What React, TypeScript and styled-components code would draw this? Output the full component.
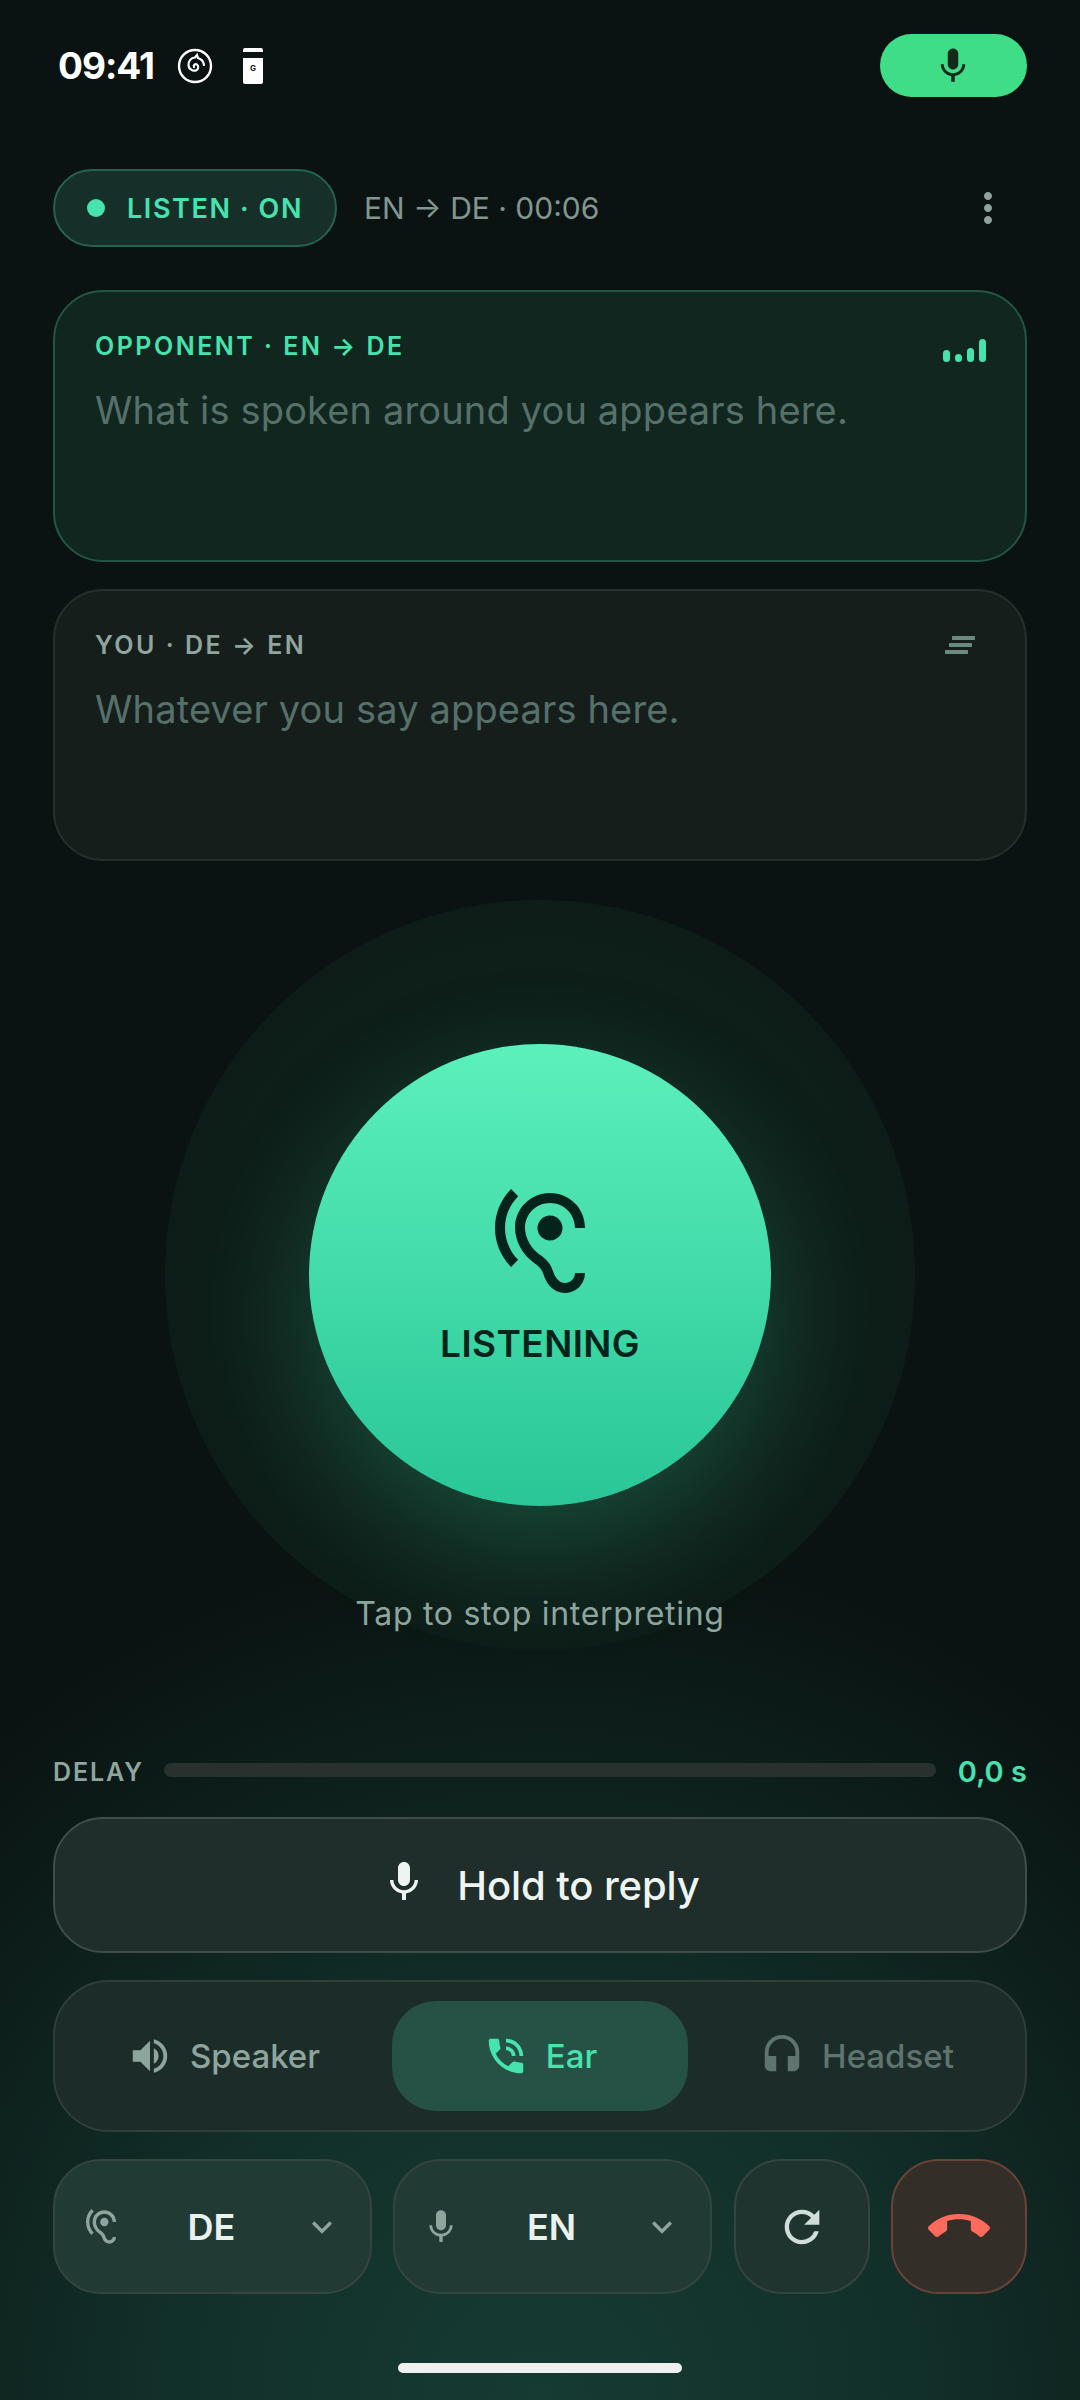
import React from 'react';
import styled, { createGlobalStyle } from 'styled-components';
import {
  MdMic,
  MdMoreVert,
  MdHearing,
  MdVolumeUp,
  MdPhoneInTalk,
  MdHeadset,
  MdExpandMore,
  MdRefresh,
  MdCallEnd,
} from 'react-icons/md';

const GlobalStyle = createGlobalStyle`
  html, body {
    margin: 0;
    padding: 0;
    background: #0b1412;
  }
  * {
    box-sizing: border-box;
  }
`;

const Screen = styled.div`
  width: 1080px;
  height: 2400px;
  overflow: hidden;
  display: flex;
  flex-direction: column;
  padding: 34px 53px 0;
  font-family: Inter, 'Noto Sans', sans-serif;
  background:
    radial-gradient(ellipse 860px 860px at 50% 2400px, #163b32 0%, #12302a 42%, rgba(11, 20, 18, 0) 100%),
    #0a1311;
`;

const StatusBar = styled.div`
  height: 63px;
  display: flex;
  align-items: center;
  padding-left: 5px;
`;

const Clock = styled.span`
  font-size: 37px;
  font-weight: 700;
  color: #ffffff;
  letter-spacing: -1px;
`;

const SpiralIcon = styled.svg`
  width: 36px;
  height: 36px;
  margin-left: 23px;
`;

const PhoneBadge = styled.div`
  width: 20px;
  height: 36px;
  margin-left: 30px;
  background: #ffffff;
  border-radius: 2px;
  padding-top: 4px;
  display: flex;
  flex-direction: column;
  align-items: center;
`;

const PhoneCamera = styled.div`
  width: 100%;
  height: 6px;
  background: #0b1412;
`;

const PhoneLogo = styled.span`
  font-size: 8px;
  font-weight: 700;
  line-height: 1;
  margin-top: 6px;
  color: #0b1412;
`;

const MicPill = styled.div`
  margin-left: auto;
  width: 147px;
  height: 63px;
  border-radius: 32px;
  background: #3fdd87;
  display: flex;
  align-items: center;
  justify-content: center;
  color: #10291c;
  font-size: 42px;
  padding-right: 2px;
`;

const ListenRow = styled.div`
  margin-top: 72px;
  height: 78px;
  display: flex;
  align-items: center;
`;

const ListenChip = styled.div`
  width: 284px;
  height: 78px;
  border-radius: 39px;
  border: 2px solid #256350;
  background: #162f28;
  display: flex;
  align-items: center;
  padding-left: 32px;
  gap: 22px;
`;

const ChipDot = styled.span`
  width: 18px;
  height: 18px;
  border-radius: 50%;
  background: #46e3ae;
`;

const ChipText = styled.span`
  font-size: 27px;
  font-weight: 600;
  letter-spacing: 1.6px;
  color: #46e3ae;
  white-space: nowrap;
`;

const SessionText = styled.span`
  margin-left: 27px;
  font-size: 30px;
  letter-spacing: 0;
  color: #82968f;
  white-space: nowrap;
`;

const MoreButton = styled.div`
  margin-left: auto;
  margin-right: 15px;
  color: #8ea59e;
  font-size: 48px;
  display: flex;
`;

const Card = styled.section<{ $active?: boolean }>`
  height: 272px;
  border-radius: 50px;
  padding: 39px 39px 0 40px;
  border: 2px solid ${(p) => (p.$active ? '#215644' : '#262f2c')};
  background: ${(p) => (p.$active ? '#11261f' : '#161e1c')};
`;

const FirstCard = styled(Card)`
  margin-top: 43px;
`;

const SecondCard = styled(Card)`
  margin-top: 27px;
`;

const CardHead = styled.div`
  height: 30px;
  display: flex;
  align-items: center;
  justify-content: space-between;
`;

const CardLabel = styled.span<{ $active?: boolean }>`
  font-size: 25px;
  font-weight: 600;
  letter-spacing: 2.5px;
  color: ${(p) => (p.$active ? '#46e3ae' : '#8fa59e')};
  white-space: nowrap;
`;

const Bars = styled.div`
  display: flex;
  align-items: flex-end;
  gap: 5px;
  height: 23px;
  margin-top: 8px;
`;

const Bar = styled.span<{ $h: number }>`
  width: 7px;
  height: ${(p) => p.$h}px;
  border-radius: 4px;
  background: #46e3ae;
`;

const LinesIcon = styled.svg`
  width: 30px;
  height: 18px;
  margin-right: 11px;
`;

const CardBody = styled.p`
  margin: 25px 0 0;
  font-size: 38px;
  letter-spacing: 0.15px;
  line-height: 48px;
  color: #56706a;
  white-space: nowrap;
`;

const Halo = styled.div`
  margin: 39px auto 0;
  width: 750px;
  height: 750px;
  flex: none;
  border-radius: 50%;
  display: flex;
  flex-direction: column;
  align-items: center;
  padding-top: 144px;
  background: radial-gradient(circle at 50% 50%, #0f211c 0%, #0e1e19 60%, #0c1815 100%);
`;

const BigButton = styled.div`
  width: 462px;
  height: 462px;
  flex: none;
  border-radius: 50%;
  background: linear-gradient(180deg, #5cf0bc 0%, #29c697 100%);
  box-shadow: 0 40px 120px rgba(60, 220, 165, 0.24);
  display: flex;
  flex-direction: column;
  align-items: center;
  padding-top: 139px;
  color: #04241b;
  font-size: 120px;
`;

const BigLabel = styled.span`
  margin-top: 18px;
  font-size: 37px;
  font-weight: 600;
  letter-spacing: 0.4px;
  line-height: 46px;
`;

const Hint = styled.p`
  margin: 88px 0 0;
  font-size: 32px;
  letter-spacing: 0.7px;
  line-height: 40px;
  color: #8ea59e;
  white-space: nowrap;
`;

const DelayRow = styled.div`
  margin-top: 104px;
  height: 36px;
  display: flex;
  align-items: center;
`;

const DelayLabel = styled.span`
  width: 111px;
  font-size: 25px;
  font-weight: 600;
  letter-spacing: 1.9px;
  color: #8fa59e;
`;

const Track = styled.div`
  width: 772px;
  height: 14px;
  border-radius: 7px;
  background: #27322f;
  margin-top: -4px;
`;

const DelayValue = styled.span`
  margin-left: auto;
  font-size: 29px;
  font-weight: 600;
  color: #46e3ae;
  white-space: nowrap;
  margin-top: -2px;
`;

const HoldButton = styled.div`
  margin-top: 27px;
  height: 136px;
  flex: none;
  border-radius: 50px;
  border: 2px solid #3f4c48;
  background: #1f2e2a;
  display: flex;
  align-items: center;
  justify-content: center;
  gap: 29px;
  color: #eef4f1;
  font-size: 40px;
  font-weight: 500;
  letter-spacing: -0.1px;
`;

const HoldIcon = styled.span`
  display: flex;
  font-size: 48px;
  color: #eef4f1;
  margin-top: -6px;
`;

const RouteBar = styled.div`
  margin-top: 27px;
  height: 152px;
  flex: none;
  border-radius: 56px;
  border: 2px solid #303e3a;
  background: #1c2c28;
  display: grid;
  grid-template-columns: 1fr 296px 1fr;
  align-items: stretch;
  padding: 19px 0;
`;

const RouteTab = styled.div<{ $active?: boolean; $dim?: boolean }>`
  border-radius: 44px;
  display: flex;
  align-items: center;
  justify-content: center;
  gap: 17px;
  font-size: 33px;
  font-weight: 500;
  background: ${(p) => (p.$active ? '#255244' : 'transparent')};
  color: ${(p) => (p.$active ? '#46e3ae' : p.$dim ? '#5f746e' : '#8ea59e')};
`;

const RouteIcon = styled.span`
  display: flex;
  font-size: 46px;
`;

const BottomRow = styled.div`
  margin-top: 27px;
  height: 135px;
  flex: none;
  display: flex;
  gap: 21px;
`;

const LangButton = styled.div`
  width: 319px;
  border-radius: 48px;
  border: 2px solid #34443f;
  background: #213a33;
  display: grid;
  grid-template-columns: 70px 1fr 70px;
  align-items: center;
  justify-items: center;
  padding: 0 13px 0 11px;
`;

const LangIcon = styled.span`
  display: flex;
  font-size: 40px;
  color: #8ea59e;
`;

const LangName = styled.span`
  font-size: 36px;
  font-weight: 600;
  color: #eaf2ee;
`;

const SquareButton = styled.div<{ $danger?: boolean }>`
  width: 136px;
  margin-left: ${(p) => (p.$danger ? '0' : '1px')};
  border-radius: 48px;
  border: 2px solid ${(p) => (p.$danger ? '#6b4238' : '#34443f')};
  background: ${(p) => (p.$danger ? '#342e28' : '#1f342e')};
  color: ${(p) => (p.$danger ? '#ff6b5b' : '#cfded8')};
  display: flex;
  align-items: center;
  justify-content: center;
  font-size: ${(p) => (p.$danger ? '62px' : '52px')};
`;

const HomeBar = styled.div`
  margin: 69px auto 0;
  width: 284px;
  height: 10px;
  flex: none;
  border-radius: 5px;
  background: #eef1ef;
`;

const App = () => {
  return (
    <>
      <GlobalStyle />
      <Screen>
        <StatusBar>
          <Clock>09:41</Clock>
          <SpiralIcon viewBox="0 0 36 36" fill="none" stroke="#fff" strokeLinecap="round">
            <circle cx="18" cy="18" r="16" strokeWidth="2.4" />
            <path
              d="M17 19a2 2 0 0 1 3 -2.5a3.6 3.6 0 0 1 -1 6a6 6 0 0 1 -7.500 -5a7 7 0 0 1 6.500 -8l2 -2.500l1 3a8.500 8.500 0 0 1 6 7"
              strokeWidth="2.200"
            />
          </SpiralIcon>
          <PhoneBadge>
            <PhoneCamera />
            <PhoneLogo>G</PhoneLogo>
          </PhoneBadge>
          <MicPill>
            <MdMic />
          </MicPill>
        </StatusBar>

        <ListenRow>
          <ListenChip>
            <ChipDot />
            <ChipText>LISTEN · ON</ChipText>
          </ListenChip>
          <SessionText>EN → DE · 00:06</SessionText>
          <MoreButton>
            <MdMoreVert />
          </MoreButton>
        </ListenRow>

        <FirstCard $active>
          <CardHead>
            <CardLabel $active>OPPONENT · EN → DE</CardLabel>
            <Bars>
              {[12, 8, 14, 23].map((h, i) => (
                <Bar key={i} $h={h} />
              ))}
            </Bars>
          </CardHead>
          <CardBody>What is spoken around you appears here.</CardBody>
        </FirstCard>

        <SecondCard>
          <CardHead>
            <CardLabel>YOU · DE → EN</CardLabel>
            <LinesIcon viewBox="0 0 30 18" fill="#6a8a80">
              <rect x="7" y="0" width="23" height="4" rx="0.5" />
              <rect x="4" y="7" width="23" height="4" rx="0.5" />
              <rect x="0" y="14" width="23" height="4" rx="0.5" />
            </LinesIcon>
          </CardHead>
          <CardBody>Whatever you say appears here.</CardBody>
        </SecondCard>

        <Halo>
          <BigButton>
            <MdHearing />
            <BigLabel>LISTENING</BigLabel>
          </BigButton>
          <Hint>Tap to stop interpreting</Hint>
        </Halo>

        <DelayRow>
          <DelayLabel>DELAY</DelayLabel>
          <Track />
          <DelayValue>0,0 s</DelayValue>
        </DelayRow>

        <HoldButton>
          <HoldIcon>
            <MdMic />
          </HoldIcon>
          Hold to reply
        </HoldButton>

        <RouteBar>
          <RouteTab>
            <RouteIcon>
              <MdVolumeUp />
            </RouteIcon>
            Speaker
          </RouteTab>
          <RouteTab $active>
            <RouteIcon>
              <MdPhoneInTalk />
            </RouteIcon>
            Ear
          </RouteTab>
          <RouteTab $dim>
            <RouteIcon>
              <MdHeadset />
            </RouteIcon>
            Headset
          </RouteTab>
        </RouteBar>

        <BottomRow>
          <LangButton>
            <LangIcon>
              <MdHearing />
            </LangIcon>
            <LangName>DE</LangName>
            <LangIcon>
              <MdExpandMore />
            </LangIcon>
          </LangButton>
          <LangButton>
            <LangIcon>
              <MdMic />
            </LangIcon>
            <LangName>EN</LangName>
            <LangIcon>
              <MdExpandMore />
            </LangIcon>
          </LangButton>
          <SquareButton>
            <MdRefresh />
          </SquareButton>
          <SquareButton $danger>
            <MdCallEnd />
          </SquareButton>
        </BottomRow>

        <HomeBar />
      </Screen>
    </>
  );
};

export default App;
